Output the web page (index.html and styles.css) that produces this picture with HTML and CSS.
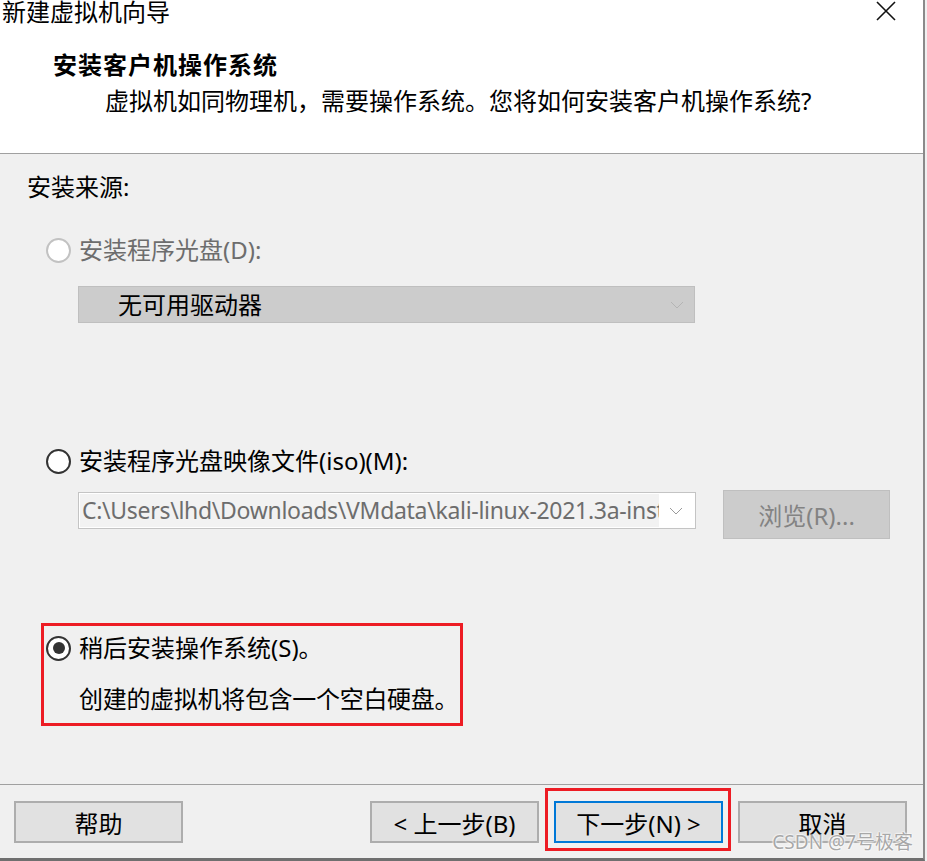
FILE: index.html
```html
<!DOCTYPE html>
<html>
  <head>
    <title>新建虚拟机向导</title>
    <link rel="stylesheet" href="styles.css">
  </head>
  <body>
    <div class="window">
      <div class="header">
        <div class="titlebar">
          <span class="title">新建虚拟机向导</span>
          <svg class="close" width="22" height="20" viewBox="0 0 22 20">
            <path d="M2 1 L20 19 M20 1 L2 19" stroke="#111" stroke-width="1.6" fill="none"/>
          </svg>
        </div>
        <div class="heading">安装客户机操作系统</div>
        <div class="subtitle">虚拟机如同物理机，需要操作系统。您将如何安装客户机操作系统?</div>
      </div>

      <div class="content">
        <div class="section-label">安装来源:</div>

        <div class="radio-row disabled">
          <span class="radio"></span>
          <span>安装程序光盘(D):</span>
        </div>
        <div class="dropdown">
          <span>无可用驱动器</span>
          <svg class="chevron" width="14" height="8" viewBox="0 0 14 8">
            <path d="M1 1 L7 7 L13 1" stroke="#b4b4b4" stroke-width="1" fill="none"/>
          </svg>
        </div>

        <div class="radio-row iso">
          <span class="radio"></span>
          <span>安装程序光盘映像文件(iso)(M):</span>
        </div>
        <div class="iso-row">
          <div class="combo">
            <span class="path">C:\Users\lhd\Downloads\VMdata\kali-linux-2021.3a-installer-amd64.iso</span>
            <svg class="chevron" width="14" height="8" viewBox="0 0 14 8">
              <path d="M1 1 L7 7 L13 1" stroke="#9a9a9a" stroke-width="1" fill="none"/>
            </svg>
          </div>
          <div class="browse">浏览(R)...</div>
        </div>

        <div class="later-box">
          <div class="radio-row">
            <span class="radio checked"></span>
            <span>稍后安装操作系统(S)。</span>
          </div>
          <div class="note">创建的虚拟机将包含一个空白硬盘。</div>
        </div>
      </div>

      <div class="footer">
        <div class="btn">帮助</div>
        <div class="footer-right">
          <div class="btn">&lt; 上一步(B)</div>
          <div class="btn primary">下一步(N) &gt;</div>
          <div class="btn">取消</div>
        </div>
        <div class="watermark">CSDN @7号极客</div>
      </div>
    </div>
  </body>
</html>
```

FILE: styles.css
```css
body {
  margin: 0;
  background: #f0f0f0;
  font-family: "Noto Sans", "Noto Sans CJK SC", sans-serif;
  font-size: 24px;
  color: #000;
}
.window {
  width: 923px;
  height: 858px;
  border-right: 2px solid #8a8a8a;
  border-bottom: 3px solid #6f6f6f;
  display: flex;
  flex-direction: column;
  background: #f0f0f0;
}
.header {
  background: #fff;
  height: 153px;
  border-bottom: 1px solid #a0a0a0;
  flex-shrink: 0;
}
.titlebar {
  height: 26px;
  display: flex;
  justify-content: space-between;
  align-items: flex-start;
}
.title {
  font-size: 24px;
  line-height: 24px;
  padding-left: 2px;
}
.close {
  margin-top: 1px;
  margin-right: 26px;
}
.heading {
  font-weight: bold;
  line-height: 30px;
  margin-top: 24px;
  padding-left: 53px;
  letter-spacing: 1px;
}
.subtitle {
  line-height: 30px;
  margin-top: 6px;
  padding-left: 105px;
}
.content {
  flex: 1;
  padding: 18px 0 0 27px;
}
.section-label {
  line-height: 30px;
}
.radio-row {
  display: flex;
  align-items: center;
  gap: 8px;
  line-height: 30px;
  margin-top: 33px;
  margin-left: 19px;
}
.radio-row.disabled {
  color: #6d6d6d;
}
.radio-row.iso {
  margin-top: 123px;
}
.radio {
  width: 21px;
  height: 21px;
  border: 2px solid #333;
  border-radius: 50%;
  background: #fff;
  position: relative;
  flex-shrink: 0;
}
.disabled .radio {
  border-color: #c2c2c2;
}
.radio.checked::after {
  content: "";
  position: absolute;
  left: 4.5px;
  top: 4.5px;
  width: 12px;
  height: 12px;
  border-radius: 50%;
  background: #333;
}
.dropdown {
  width: 576px;
  height: 35px;
  margin: 21px 0 0 51px;
  background: #cccccc;
  border: 1px solid #bfbfbf;
  display: flex;
  align-items: center;
  justify-content: space-between;
  padding-left: 39px;
  line-height: 35px;
}
.chevron {
  margin-right: 10px;
  flex-shrink: 0;
}
.iso-row {
  display: flex;
  align-items: flex-start;
  gap: 27px;
  margin: 14px 0 0 51px;
}
.combo {
  width: 616px;
  height: 35px;
  margin-top: 2px;
  background: #fff;
  border: 1px solid #c4c4c4;
  display: flex;
  align-items: center;
  gap: 10px;
}
.path {
  width: 579px;
  height: 33px;
  margin-left: 1px;
  background: #f2f2f2;
  color: #6d6d6d;
  font-size: 23px;
  line-height: 33px;
  white-space: nowrap;
  overflow: hidden;
  letter-spacing: -0.3px;
  padding-left: 2px;
  box-sizing: border-box;
}
.browse {
  width: 165px;
  height: 47px;
  background: #cccccc;
  border: 1px solid #bfbfbf;
  color: #838383;
  display: flex;
  align-items: center;
  justify-content: center;
}
.later-box {
  width: 416px;
  margin: 84px 0 0 14px;
  border: 3px solid #ed1c24;
  padding: 7px 0 9px 0;
}
.later-box .radio-row {
  margin: 0 0 0 2px;
}
.note {
  line-height: 30px;
  margin: 21px 0 0 35px;
  white-space: nowrap;
  letter-spacing: -0.3px;
}
.footer {
  height: 57px;
  flex-shrink: 0;
  border-top: 1px solid #a0a0a0;
  display: flex;
  justify-content: space-between;
  align-items: flex-start;
  padding: 16px 16px 0 14px;
  position: relative;
}
.footer-right {
  display: flex;
  gap: 15px;
}
.btn {
  width: 165px;
  height: 38px;
  background: #e1e1e1;
  border: 2px solid #adadad;
  display: flex;
  align-items: center;
  justify-content: center;
}
.btn.primary {
  border-color: #0078d7;
  position: relative;
}
.btn.primary::after {
  content: "";
  position: absolute;
  left: -11px;
  top: -15px;
  right: -10px;
  bottom: -10px;
  border: 3px solid #ed1c24;
}
.watermark {
  position: absolute;
  right: 10px;
  bottom: 3px;
  font-size: 19px;
  color: #a8a8a8;
  text-shadow: 0 0 2px #fff, 0 0 2px #fff, 0 0 2px #fff;
}
```
